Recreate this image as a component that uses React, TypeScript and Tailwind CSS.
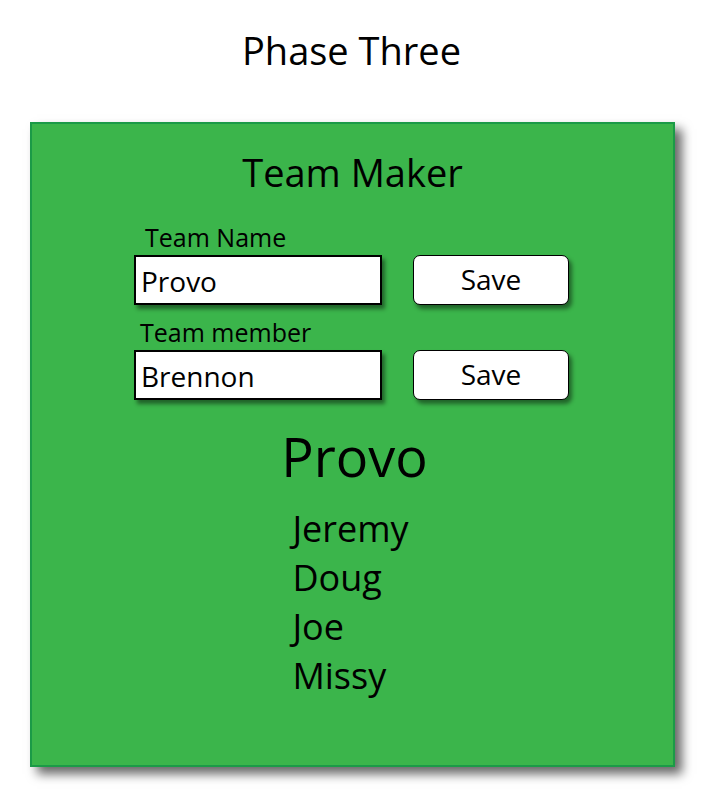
import React from "react";

const font = "font-['Open_Sans',sans-serif]";

function Field({ value }: { value: string }) {
  return (
    <div className="w-[248px] h-[50px] border-2 border-black bg-white pl-[5px] pt-[3px] leading-[43px] text-[28px] text-black shadow-[3px_4px_4px_rgba(0,0,0,0.45)]">
      {value}
    </div>
  );
}

function SaveButton() {
  return (
    <button className="w-[156px] h-[50px] rounded-[7px] border-[1.5px] border-black bg-white text-[28px] leading-[44px] pb-[2px] text-black text-center shadow-[3px_4px_4px_rgba(0,0,0,0.45)]">
      Save
    </button>
  );
}

export default function App() {
  return (
    <div className={`${font} w-[703px] h-[794px] bg-white text-black`}>
      <h1 className="pt-[30px] text-center text-[38px] leading-[40px] font-normal">
        Phase Three
      </h1>
      <div className="mt-[52px] ml-[30px] w-[645px] h-[645px] border-2 border-[#1b9a47] bg-[#3bb54b] shadow-[7px_7px_10px_rgba(0,0,0,0.6)] pt-[28px]">
        <h2 className="text-center text-[38px] leading-[40px] font-normal">
          Team Maker
        </h2>
        <div className="ml-[102px] mt-[31px]">
          <div className="ml-[11px] text-[25px] leading-[28px]">Team Name</div>
          <div className="mt-[4px] flex gap-[31px]">
            <Field value="Provo" />
            <SaveButton />
          </div>
          <div className="mt-[13px] ml-[6px] text-[25px] leading-[28px]">Team member</div>
          <div className="mt-[4px] flex gap-[31px]">
            <Field value="Brennon" />
            <SaveButton />
          </div>
        </div>
        <div className="mt-[26px] text-center text-[54px] leading-[60px] pl-[4px]">Provo</div>
        <div className="mt-[18px] flex justify-center pr-[4px]">
          <ul className="text-left text-[36px] leading-[49px]">
            <li>Jeremy</li>
            <li>Doug</li>
            <li>Joe</li>
            <li>Missy</li>
          </ul>
        </div>
      </div>
    </div>
  );
}
